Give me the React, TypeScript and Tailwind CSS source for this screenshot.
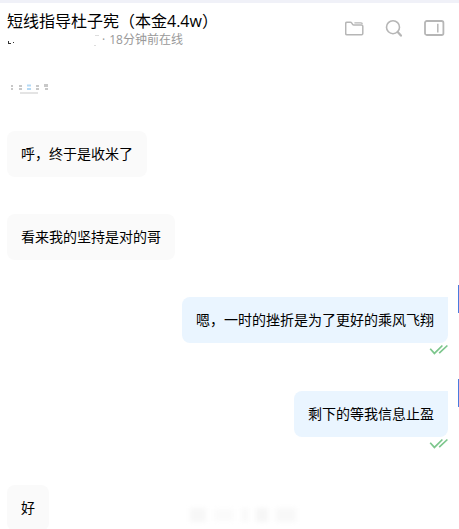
import React from 'react';

interface Message {
  id: number;
  text: string;
  mine: boolean;
  spacing: string;
}

const messages: Message[] = [
  { id: 1, text: '呼，终于是收米了', mine: false, spacing: 'mt-[35px]' },
  { id: 2, text: '看来我的坚持是对的哥', mine: false, spacing: 'mt-[37px]' },
  { id: 3, text: '嗯，一时的挫折是为了更好的乘风飞翔', mine: true, spacing: 'mt-[37px]' },
  { id: 4, text: '剩下的等我信息止盈', mine: true, spacing: 'mt-[33px]' },
  { id: 5, text: '好', mine: false, spacing: 'mt-[33px]' },
];

function FolderIcon() {
  return (
    <svg width="20" height="18" viewBox="0 0 20 18" fill="none" stroke="#b6b6b6" strokeWidth="1.5" strokeLinejoin="round">
      <path d="M1.9 3.2h3.6q.7 0 1.1.6l1 1.5q.4.7 1.2.7h7.8q1.2 0 1.2 1.2v7.4q0 1.2-1.2 1.2H1.9q-1.2 0-1.2-1.2V4.4q0-1.2 1.2-1.2Z" />
      <path d="M9.4 3.8h6.2q1.4 0 1.9 1" strokeWidth="1.3" />
    </svg>
  );
}

function SearchIcon() {
  return (
    <svg width="18" height="18" viewBox="0 0 18 18" fill="none" stroke="#b6b6b6" strokeWidth="1.6">
      <circle cx="8" cy="8.2" r="6.5" />
      <path d="m12.7 13 3.2 3.6" strokeWidth="2.2" strokeLinecap="round" />
    </svg>
  );
}

function PanelIcon() {
  return (
    <svg width="22" height="18" viewBox="0 0 22 18" fill="none" stroke="#b6b6b6" strokeWidth="1.8">
      <rect x="2" y="2" width="18.4" height="14" rx="1.8" />
      <path d="M14.8 4.8v8.6" strokeWidth="1.5" />
    </svg>
  );
}

function ReadTicks() {
  return (
    <svg className="mt-px" width="20" height="12" viewBox="0 0 20 12" fill="none" stroke="#7cc68c" strokeWidth="1.7">
      <path d="m2.2 4.8 4.2 4.6L14.4 1.5M11.2 9.2l8.2-7.7" />
    </svg>
  );
}

// Clipped remains of the blurred date line
function DateMark() {
  return (
    <svg className="block" width="40" height="12" viewBox="0 0 40 12">
      <g fill="#c8c8c8">
        <path d="M1 1h2v2H1zM1 4h2v2H1zM9 1h3v2H9zM9 4h3v2H9zM26 1h3v2h-3zM26 4h3v2h-3zM34 0h4v3h-4zM35 4h3v2h-3z" />
        <path d="M10 8.5h18v1H10z" />
      </g>
      <path d="M17 .5h4v2h-4zM17 4h4v2h-4z" fill="#b5daf5" />
    </svg>
  );
}

function MessageRow({ message }: { message: Message }) {
  if (message.mine) {
    return (
      <div className={`flex justify-end ${message.spacing}`}>
        <div className="flex flex-col items-end">
          <div className="h-[46px] rounded-lg rounded-tr-none bg-[#eaf5ff] px-3.5 leading-[46px]">
            {message.text}
          </div>
          <div className="h-[15px]">
            <ReadTicks />
          </div>
        </div>
        <div className="-mt-3 ml-2.5 h-7 w-px shrink-0 bg-[#4a7be0]" />
      </div>
    );
  }

  return (
    <div className={`flex pl-[7px] ${message.spacing}`}>
      <div className="h-[46px] rounded-lg bg-[#fafafa] px-3.5 leading-[46px]">{message.text}</div>
    </div>
  );
}

export default function App() {
  return (
    <div className="relative h-[529px] w-[459px] overflow-hidden bg-white font-['Open_Sans','Noto_Sans_CJK_SC',sans-serif] text-sm text-black">
      <div className="h-[3px] bg-[#f0f1f8]" />
      <header className="flex h-[77px] items-start justify-between pl-[7px]">
        <div>
          <h1 className="mt-[7px] h-[22px] whitespace-nowrap text-base leading-[22px]">
            短线指导杜子宪（本金4.4w）
          </h1>
          <div className="flex h-4 items-center text-xs leading-4 text-[#999999]">
            <svg width="95" height="14" viewBox="0 0 95 14">
              <path d="M1 8h1v2h2v1H1zM6 9h1v1H6z" fill="#333" />
              <path d="M88 2.5h4M87 12.5h2" stroke="#ddd" />
            </svg>
            <span className="whitespace-nowrap">
              ·<span className="ml-[4px]">18分钟前在线</span>
            </span>
          </div>
        </div>
        <div className="mt-4 mr-3.5 flex items-center gap-5">
          <FolderIcon />
          <SearchIcon />
          <PanelIcon />
        </div>
      </header>
      <main>
        <div className="h-4 pt-1 pl-[10px]">
          <DateMark />
        </div>
        {messages.map((message) => (
          <MessageRow key={message.id} message={message} />
        ))}
      </main>
      {/* faint watermark over the conversation */}
      <div className="absolute bottom-1.5 left-[190px] flex h-4 items-center gap-2 blur-[2px]">
        <span className="h-3.5 w-4 bg-[#f7f7f7]" />
        <span className="h-3 w-5 bg-[#fbfbfb]" />
        <span className="h-3.5 w-1.5 bg-[#f9f9f9]" />
        <span className="h-3.5 w-3 bg-[#f6f6f6]" />
        <span className="h-3.5 w-5 bg-[#f8f8f8]" />
      </div>
    </div>
  );
}
